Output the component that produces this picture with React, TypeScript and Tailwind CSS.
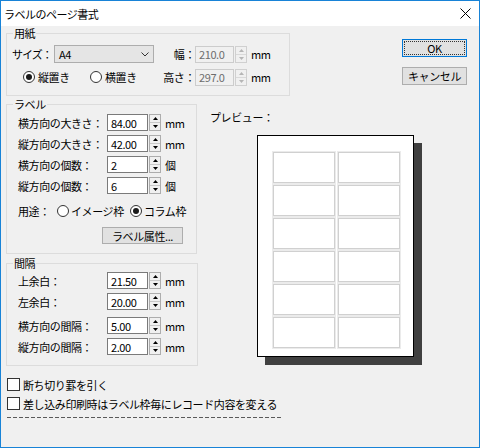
import React from "react"

const Spin = ({ disabled = false }: { disabled?: boolean }) => {
  const c = disabled ? "#b5b5b5" : "#000000"
  return (
    <div className={`ml-[1px] flex h-[17px] w-[12px] flex-col border bg-[#f0f0f0] ${disabled ? "border-[#d0d0d0]" : "border-[#adadad]"}`}>
      <div className={`flex flex-1 items-center justify-center border-b ${disabled ? "border-[#d9d9d9]" : "border-[#c8c8c8]"}`}>
        <svg width="5" height="3" viewBox="0 0 5 3"><path d="M2.5 0L5 3H0z" fill={c} /></svg>
      </div>
      <div className="flex flex-1 items-center justify-center">
        <svg width="5" height="3" viewBox="0 0 5 3"><path d="M0 0h5L2.5 3z" fill={c} /></svg>
      </div>
    </div>
  )
}

const NumField = ({ value, unit, disabled = false, narrow = false }: { value: string; unit: string; disabled?: boolean; narrow?: boolean }) => (
  <div className="flex items-center">
    <div
      className={`flex h-[17px] items-center border pl-[3px] ${narrow ? "w-[39px]" : "w-[41px]"} ${
        disabled ? "border-[#cccccc] bg-[#f0f0f0] text-[#6d6d6d]" : "border-[#7a7a7a] bg-white"
      }`}
    >
      {value}
    </div>
    <Spin disabled={disabled} />
    <span className="ml-[4px]">{unit}</span>
  </div>
)

const Radio = ({ checked = false }: { checked?: boolean }) => (
  <span className="flex h-[12px] w-[12px] shrink-0 items-center justify-center rounded-full border border-[#333333] bg-white">
    {checked && <span className="h-[6px] w-[6px] rounded-full bg-[#1a1a1a]" />}
  </span>
)

const Checkbox = ({ label }: { label: string }) => (
  <div className="flex h-[13px] items-center">
    <span className="h-[13px] w-[13px] border border-[#333333] bg-white" />
    <span className="ml-[3px]">{label}</span>
  </div>
)

const Row = ({ label, value, unit, className = "" }: { label: string; value: string; unit: string; className?: string }) => (
  <div className={`flex h-[17px] items-center ${className}`}>
    <span className="w-[89px] shrink-0">{label}</span>
    <NumField value={value} unit={unit} />
  </div>
)

const Button = ({ children, focused = false }: { children: React.ReactNode; focused?: boolean }) => (
  <div
    className={`flex h-[18px] w-[65px] items-center justify-center border bg-[#e1e1e1] ${
      focused ? "border-[#0078d7]" : "border-[#adadad]"
    }`}
  >
    {focused ? (
      <span className="flex h-[14px] w-[61px] items-center justify-center border border-dotted border-[#333333]">{children}</span>
    ) : (
      children
    )}
  </div>
)

export default function App() {
  return (
    <div className="flex h-[448px] w-[480px] flex-col whitespace-nowrap border border-[#1883d7] bg-[#f0f0f0] font-['Noto_Sans_CJK_JP',sans-serif] text-[11px] leading-[12px] tracking-[-0.4px] text-black">
      {/* title bar */}
      <div className="flex h-[25px] items-center bg-white pl-[3px]">
        <span className="text-[11px] tracking-[-0.5px]">ラベルのページ書式</span>
        <svg className="ml-auto mr-[8px]" width="11" height="11" viewBox="0 0 11 11">
          <path d="M0.5 0.5L10.5 10.5M10.5 0.5L0.5 10.5" stroke="#000" strokeWidth="1" />
        </svg>
      </div>

      <div className="flex flex-col pl-[5px] pt-[1px]">
        {/* paper + buttons */}
        <div className="flex items-start">
          <fieldset className="w-[284px] border border-[#dcdcdc] pb-[9px]">
            <legend className="ml-[6px] px-[1px] leading-[12px]">用紙</legend>
            <div className="flex pl-[5px] pt-[6px]">
              <div className="flex w-[142px] flex-col gap-[5px]">
                <div className="flex h-[18px] items-center">
                  <span className="w-[42px] shrink-0 tracking-[-1px]">サイズ：</span>
                  <div className="flex h-[18px] w-[100px] items-center border border-[#adadad] bg-[#e5e5e5] pl-[4px]">
                    A4
                    <svg className="ml-auto mr-[4px]" width="8" height="5" viewBox="0 0 8 5">
                      <path d="M0.5 0.5L4 4L7.5 0.5" stroke="#333" fill="none" />
                    </svg>
                  </div>
                </div>
                <div className="flex h-[18px] items-center pl-[11px]">
                  <Radio checked />
                  <span className="ml-[3px] w-[52px]">縦置き</span>
                  <Radio />
                  <span className="ml-[3px]">横置き</span>
                </div>
              </div>
              <div className="flex flex-col gap-[5px]">
                <div className="flex h-[18px] items-center">
                  <span className="w-[41px] shrink-0 text-right">幅：</span>
                  <NumField value="210.0" unit="mm" disabled narrow />
                </div>
                <div className="flex h-[18px] items-center">
                  <span className="w-[41px] shrink-0 text-right">高さ：</span>
                  <NumField value="297.0" unit="mm" disabled narrow />
                </div>
              </div>
            </div>
          </fieldset>
          <div className="ml-[112px] mt-[12px] flex flex-col gap-[10px]">
            <Button focused>OK</Button>
            <Button>キャンセル</Button>
          </div>
        </div>

        {/* label + margins + preview */}
        <div className="mt-[2px] flex items-start">
          <div className="flex w-[192px] flex-col">
            <fieldset className="w-[191px] border border-[#dcdcdc] pb-[9px]">
              <legend className="ml-[6px] px-[1px] leading-[12px]">ラベル</legend>
              <div className="flex flex-col gap-[4px] pl-[11px] pt-[4px]">
                <Row label="横方向の大きさ：" value="84.00" unit="mm" />
                <Row label="縦方向の大きさ：" value="42.00" unit="mm" />
                <Row label="横方向の個数：" value="2" unit="個" />
                <Row label="縦方向の個数：" value="6" unit="個" />
              </div>
              <div className="mt-[10px] flex h-[14px] items-center pl-[11px]">
                <span className="w-[39px]">用途：</span>
                <Radio />
                <span className="ml-[2px] w-[59px]">イメージ枠</span>
                <Radio checked />
                <span className="ml-[2px]">コラム枠</span>
              </div>
              <div className="ml-[95px] mt-[9px] flex h-[17px] w-[81px] items-center justify-center border border-[#adadad] bg-[#e1e1e1]">
                ラベル属性...
              </div>
            </fieldset>

            <fieldset className="mt-[3px] w-[192px] border border-[#dcdcdc] pb-[10px]">
              <legend className="ml-[6px] px-[1px] leading-[12px]">間隔</legend>
              <div className="flex flex-col pl-[11px] pt-[3px]">
                <Row label="上余白：" value="21.50" unit="mm" />
                <Row label="左余白：" value="20.00" unit="mm" className="mt-[4px]" />
                <Row label="横方向の間隔：" value="5.00" unit="mm" className="mt-[7px]" />
                <Row label="縦方向の間隔：" value="2.00" unit="mm" className="mt-[4px]" />
              </div>
            </fieldset>
          </div>

          <div className="flex flex-col">
            <span className="ml-[12px] mt-[13px]">プレビュー：</span>
            <div className="ml-[59px] mt-[12px] h-[222px] w-[157px] border border-black bg-white pl-[15px] pt-[16px] shadow-[8px_8px_0_#404040]">
              <div className="grid grid-cols-[62px_62px] gap-x-[3px] gap-y-[2px]">
                {Array.from({ length: 12 }).map((_, i) => (
                  <div key={i} className="h-[31px] border border-[#d0d0d0] shadow-[0_0_0_1px_#ebebeb]" />
                ))}
              </div>
            </div>
          </div>
        </div>

        {/* options */}
        <div className="ml-[1px] mt-[12px] flex flex-col gap-[6px]">
          <Checkbox label="断ち切り罫を引く" />
          <Checkbox label="差し込み印刷時はラベル枠毎にレコード内容を変える" />
        </div>
        <div className="ml-[1px] mt-[7px] h-[1px] w-[275px] bg-[repeating-linear-gradient(90deg,#5a5a5a_0_4px,transparent_4px_6px)]" />
      </div>
    </div>
  )
}
